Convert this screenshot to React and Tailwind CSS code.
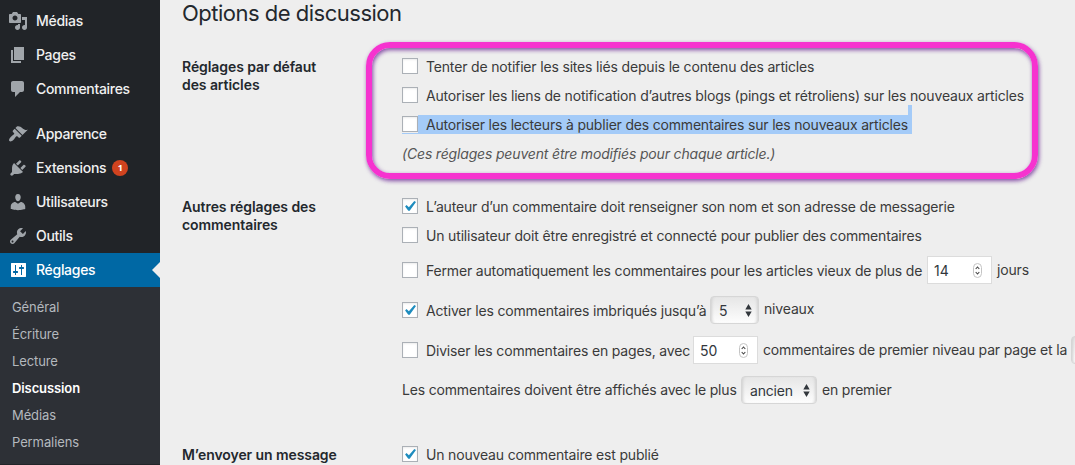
import React from "react";

const icons = {
  media:
    "M13 11V4c0-.55-.45-1-1-1h-1.67L9 1H5L3.67 3H2c-.55 0-1 .45-1 1v7c0 .55.45 1 1 1h10c.55 0 1-.45 1-1zM7 4.5c1.38 0 2.5 1.12 2.5 2.5S8.38 9.5 7 9.5 4.5 8.38 4.5 7 5.62 4.5 7 4.5zM14 6h5v10.5c0 1.38-1.12 2.5-2.5 2.5S14 17.88 14 16.5s1.12-2.5 2.5-2.5c.17 0 .34.02.5.05V9h-3V6zm-4 8.05V13h2v3.5c0 1.38-1.12 2.5-2.5 2.5S7 17.88 7 16.5 8.12 14 9.5 14c.17 0 .34.02.5.05z",
  page: "M6 15V2h10v13H6zm-1 1h8v2H3V5h2v11z",
  comments:
    "M5 2h9c1.1 0 2 .9 2 2v7c0 1.1-.9 2-2 2h-2l-5 5v-5H5c-1.1 0-2-.9-2-2V4c0-1.1.9-2 2-2z",
  appearance:
    "M14.48 11.06L7.41 3.99l1.5-1.5c.5-.56 2.3-.47 3.51.32 1.21.8 1.43 1.28 2.91 2.1 1.18.64 2.45 1.26 4.45.85zm-.71.71L6.7 4.7 4.93 6.47c-.39.39-.39 1.02 0 1.41l1.06 1.06c.39.39.39 1.03 0 1.42-.6.6-1.43 1.11-2.21 1.69-.35.26-.7.53-1.01.84C1.43 14.23.4 16.08 1.4 17.07c.99 1 2.84-.03 4.18-1.36.31-.31.58-.66.85-1.02.57-.78 1.08-1.61 1.69-2.21.39-.39 1.02-.39 1.41 0l1.06 1.06c.39.39 1.02.39 1.41 0z",
  plugins:
    "M13.11 4.36L9.87 7.6 8 5.73l3.24-3.24c.35-.34 1.05-.2 1.56.32.52.51.66 1.21.31 1.55zm-8 1.77l.91-1.12 9.01 9.01-1.19.84c-.71.71-2.63 1.16-3.82 1.16H6.14L4.9 17.26c-.59.59-1.54.59-2.12 0-.59-.58-.59-1.53 0-2.12l1.24-1.24v-3.88c0-1.13.4-3.19 1.09-3.89zm7.26 3.97l3.24-3.24c.34-.35 1.04-.21 1.55.31.52.51.66 1.21.31 1.55l-3.24 3.25z",
  users:
    "M10 9.25c-2.27 0-2.73-3.44-2.73-3.44C7 4.02 7.82 2 9.97 2c2.16 0 2.98 2.02 2.71 3.81 0 0-.41 3.44-2.68 3.44zm0 2.57L12.72 10c2.39 0 4.52 2.33 4.52 4.53v2.49s-3.65 1.13-7.24 1.13c-3.65 0-7.24-1.13-7.24-1.13v-2.49c0-2.25 1.94-4.48 4.47-4.48z",
  tools:
    "M16.68 9.77c-1.34 1.34-3.3 1.67-4.95.99l-5.41 6.52c-.99.99-2.59.99-3.58 0s-.99-2.59 0-3.57l6.52-5.42c-.68-1.65-.35-3.61.99-4.95 1.28-1.28 3.12-1.62 4.72-1.06l-2.89 2.89 2.82 2.82 2.86-2.87c.53 1.58.18 3.39-1.08 4.65zM3.81 16.21c.4.39 1.04.39 1.43 0 .4-.4.4-1.04 0-1.43-.39-.4-1.03-.4-1.43 0-.39.39-.39 1.03 0 1.43z",
  settings:
    "M18 16.5v-13c0-.3-.2-.5-.5-.5h-14c-.3 0-.5.2-.5.5v13c0 .3.2.5.5.5h14c.3 0 .5-.2.5-.5zM8 11h1.5c.3 0 .5.2.5.5v1c0 .3-.2.5-.5.5H8v2H7v-2H5.500c-.3 0-.5-.2-.5-.5v-1c0-.3.2-.5.5-.5H7V5h1zm5-2h-1.500c-.3 0-.5-.2-.5-.5v-1c0-.3.2-.5.5-.5H13V5h1v2h1.500c.3 0 .5.2.5.5v1c0 .3-.2.5-.5.5H14v6h-1z",
};

function Icon({ name, className }) {
  return (
    <svg viewBox="0 0 20 20" className={`size-5 shrink-0 ${className}`} fill="currentColor">
      <path fillRule="evenodd" d={icons[name]} />
    </svg>
  );
}

function MenuItem({ icon, label, badge, current }) {
  return (
    <div
      className={`flex h-[34px] items-center pl-2 ${
        current ? "relative bg-[#0068a4] text-white" : "text-[#f0f0f0]"
      }`}
    >
      <Icon name={icon} className={current ? "text-white" : "text-[#a0a5aa]"} />
      <span className="ml-2 pb-0.5 text-[14px] font-medium tracking-[-0.3px]">{label}</span>
      {badge && (
        <span className="ml-1.5 flex size-4 items-center justify-center rounded-full bg-[#d1431f] font-['Open_Sans','Liberation_Sans',sans-serif] text-[9px] font-bold text-white">
          {badge}
        </span>
      )}
      {current && (
        <span className="absolute top-[9px] right-0 border-y-8 border-r-8 border-y-transparent border-r-[#eeeeee]" />
      )}
    </div>
  );
}

function SubItem({ children, current }) {
  return (
    <div
      className={`flex h-[27px] items-center pl-3 text-[13px] tracking-[-0.1px] ${
        current ? "font-semibold text-white" : "text-[#b4b9be]"
      }`}
    >
      {children}
    </div>
  );
}

function Checkbox({ checked, className = "mt-1.5" }) {
  return (
    <span
      className={`flex size-4 shrink-0 items-center justify-center border border-[#abb0b6] bg-white shadow-[inset_0_1px_2px_rgba(0,0,0,0.08)] ${className}`}
    >
      {checked && (
        <svg viewBox="0 0 14 14" className="size-3.5 shrink-0" fill="#1e8cbe">
          <path d="M11.300 1.900L13 3.100 6.700 11.800H5.300L2.100 7.500 3.500 6 5.900 8.300z" />
        </svg>
      )}
    </span>
  );
}

function Row({ checked, children, tall }) {
  return (
    <div className={`flex items-start ${tall ? "h-10" : "h-[29px]"}`}>
      <Checkbox checked={checked} className={tall ? "mt-3" : "mt-1.5"} />
      <div
        className={`ml-2 flex items-center whitespace-nowrap ${tall ? "h-10" : "h-[29px]"}`}
      >
        {children}
      </div>
    </div>
  );
}

function NumberInput({ value }) {
  return (
    <span className="flex h-7 w-[65px] shrink-0 items-center justify-between border border-[#dcdcdc] bg-white pr-[9px] pl-1.5 tracking-normal text-[#32373c]">
      {value}
      <svg viewBox="0 0 9 15" className="h-[15px] w-[9px]" fill="none">
        <rect x=".5" y=".5" width="8" height="14" rx="4" stroke="#c4c4c4" />
        <path d="M2.700 6L4.500 4 6.300 6M2.700 9L4.500 11 6.300 9" stroke="#444" strokeWidth="1.100" />
      </svg>
    </span>
  );
}

function Select({ value, className = "" }) {
  return (
    <span
      className={`flex h-7 shrink-0 items-center justify-between rounded-[4px] border border-[#d6d6d6] bg-linear-to-b from-[#e6e6e6] to-[#fdfdfd] pr-1.5 pl-2 text-[#32373c] shadow-[inset_3px_0_3px_-2px_#cfcfcf,inset_-3px_0_3px_-2px_#cfcfcf] ${className}`}
    >
      {value}
      <svg viewBox="0 0 7 13" className="h-[13px] w-[7px]" fill="#32373c">
        <path d="M3.500 0L6.700 5.500H.3zM3.500 13L6.700 7.500H.3z" />
      </svg>
    </span>
  );
}

function Section({ label, className = "", children }) {
  return (
    <section className={`flex ${className}`}>
      <h3 className="w-[220px] shrink-0 pt-1.5 text-[14px] leading-[18px] font-semibold tracking-[-0.08px] text-[#23282d]">
        {label}
      </h3>
      <div className="min-w-0 tracking-[-0.17px]">{children}</div>
    </section>
  );
}

export default function App() {
  return (
    <div className="flex h-[465px] w-[1075px] overflow-hidden bg-[#eeeeee] font-['Inter','Liberation_Sans',sans-serif] text-[14px] text-[#3a3a3a]">
      <nav className="w-40 shrink-0 bg-[#212428] pt-1">
        <MenuItem icon="media" label="Médias" />
        <MenuItem icon="page" label="Pages" />
        <MenuItem icon="comments" label="Commentaires" />
        <div className="h-[11px]" />
        <MenuItem icon="appearance" label="Apparence" />
        <MenuItem icon="plugins" label="Extensions" badge="1" />
        <MenuItem icon="users" label="Utilisateurs" />
        <MenuItem icon="tools" label="Outils" />
        <MenuItem icon="settings" label="Réglages" current />
        <div className="bg-[#2d3036] pt-[7px] pb-2">
          <SubItem>Général</SubItem>
          <SubItem>Écriture</SubItem>
          <SubItem>Lecture</SubItem>
          <SubItem current>Discussion</SubItem>
          <SubItem>Médias</SubItem>
          <SubItem>Permaliens</SubItem>
        </div>
      </nav>

      <main className="relative min-w-0 flex-1 overflow-hidden pl-[22px]">
        <h2 className="h-[52px] text-[22px] leading-[26px] tracking-[-0.5px] text-[#23282d]">
          Options de discussion
        </h2>

        <Section
          className="h-[140px]"
          label={
            <>
              Réglages par défaut
              <br />
              des articles
            </>
          }
        >
          <Row>Tenter de notifier les sites liés depuis le contenu des articles</Row>
          <Row>
            Autoriser les liens de notification d’autres blogs (pings et rétroliens) sur les nouveaux
            articles
          </Row>
          <div className="relative h-[29px]">
            <span className="absolute top-[5px] left-4 h-[19px] w-[494px] bg-[#a4cbf8]" />
            <span className="absolute top-[-5px] left-[506px] h-[10px] w-1 bg-[#a4cbf8]" />
            <span className="absolute top-[23px] left-0 h-px w-4 bg-[#a4cbf8]" />
            <div className="relative tracking-[-0.19px]">
              <Row>Autoriser les lecteurs à publier des commentaires sur les nouveaux articles</Row>
            </div>
          </div>
          <p className="flex h-[29px] items-center whitespace-nowrap text-[#555555] italic">
            (Ces réglages peuvent être modifiés pour chaque article.)
          </p>
        </Section>

        <Section
          className="h-[248px]"
          label={
            <>
              Autres réglages des
              <br />
              commentaires
            </>
          }
        >
          <Row checked>L’auteur d’un commentaire doit renseigner son nom et son adresse de messagerie</Row>
          <Row>Un utilisateur doit être enregistré et connecté pour publier des commentaires</Row>
          <Row tall>
            <span className="w-[501px]">
              Fermer automatiquement les commentaires pour les articles vieux de plus de
            </span>
            <NumberInput value="14" />
            <span className="ml-[5px] pb-0.5">jours</span>
          </Row>
          <Row tall checked>
            <span className="w-[284px]">Activer les commentaires imbriqués jusqu’à</span>
            <Select value="5" className="w-[49px]" />
            <span className="ml-[5px] pb-[3px]">niveaux</span>
          </Row>
          <Row tall>
            <span className="w-[267px]">Diviser les commentaires en pages, avec</span>
            <NumberInput value="50" />
            <span className="ml-[5px] w-[308px] shrink-0 pb-px">
              commentaires de premier niveau par page et la
            </span>
            <Select className="w-[85px]" />
          </Row>
          <div className="flex h-10 items-center whitespace-nowrap">
            <span className="w-[339px] pb-0.5">
              Les commentaires doivent être affichés avec le plus
            </span>
            <Select value="ancien" className="w-[76px]" />
            <span className="ml-[5px] pb-0.5">en premier</span>
          </div>
        </Section>

        <Section label="M’envoyer un message">
          <Row checked>Un nouveau commentaire est publié</Row>
        </Section>

        <div className="absolute top-[42px] left-[206px] h-[137px] w-[672px] rounded-[24px] border-[6.500px] border-[#f632cf] shadow-[1px_2px_4px_rgba(95,20,140,0.75),inset_1px_2px_4px_rgba(95,20,140,0.75)]" />
      </main>
    </div>
  );
}
